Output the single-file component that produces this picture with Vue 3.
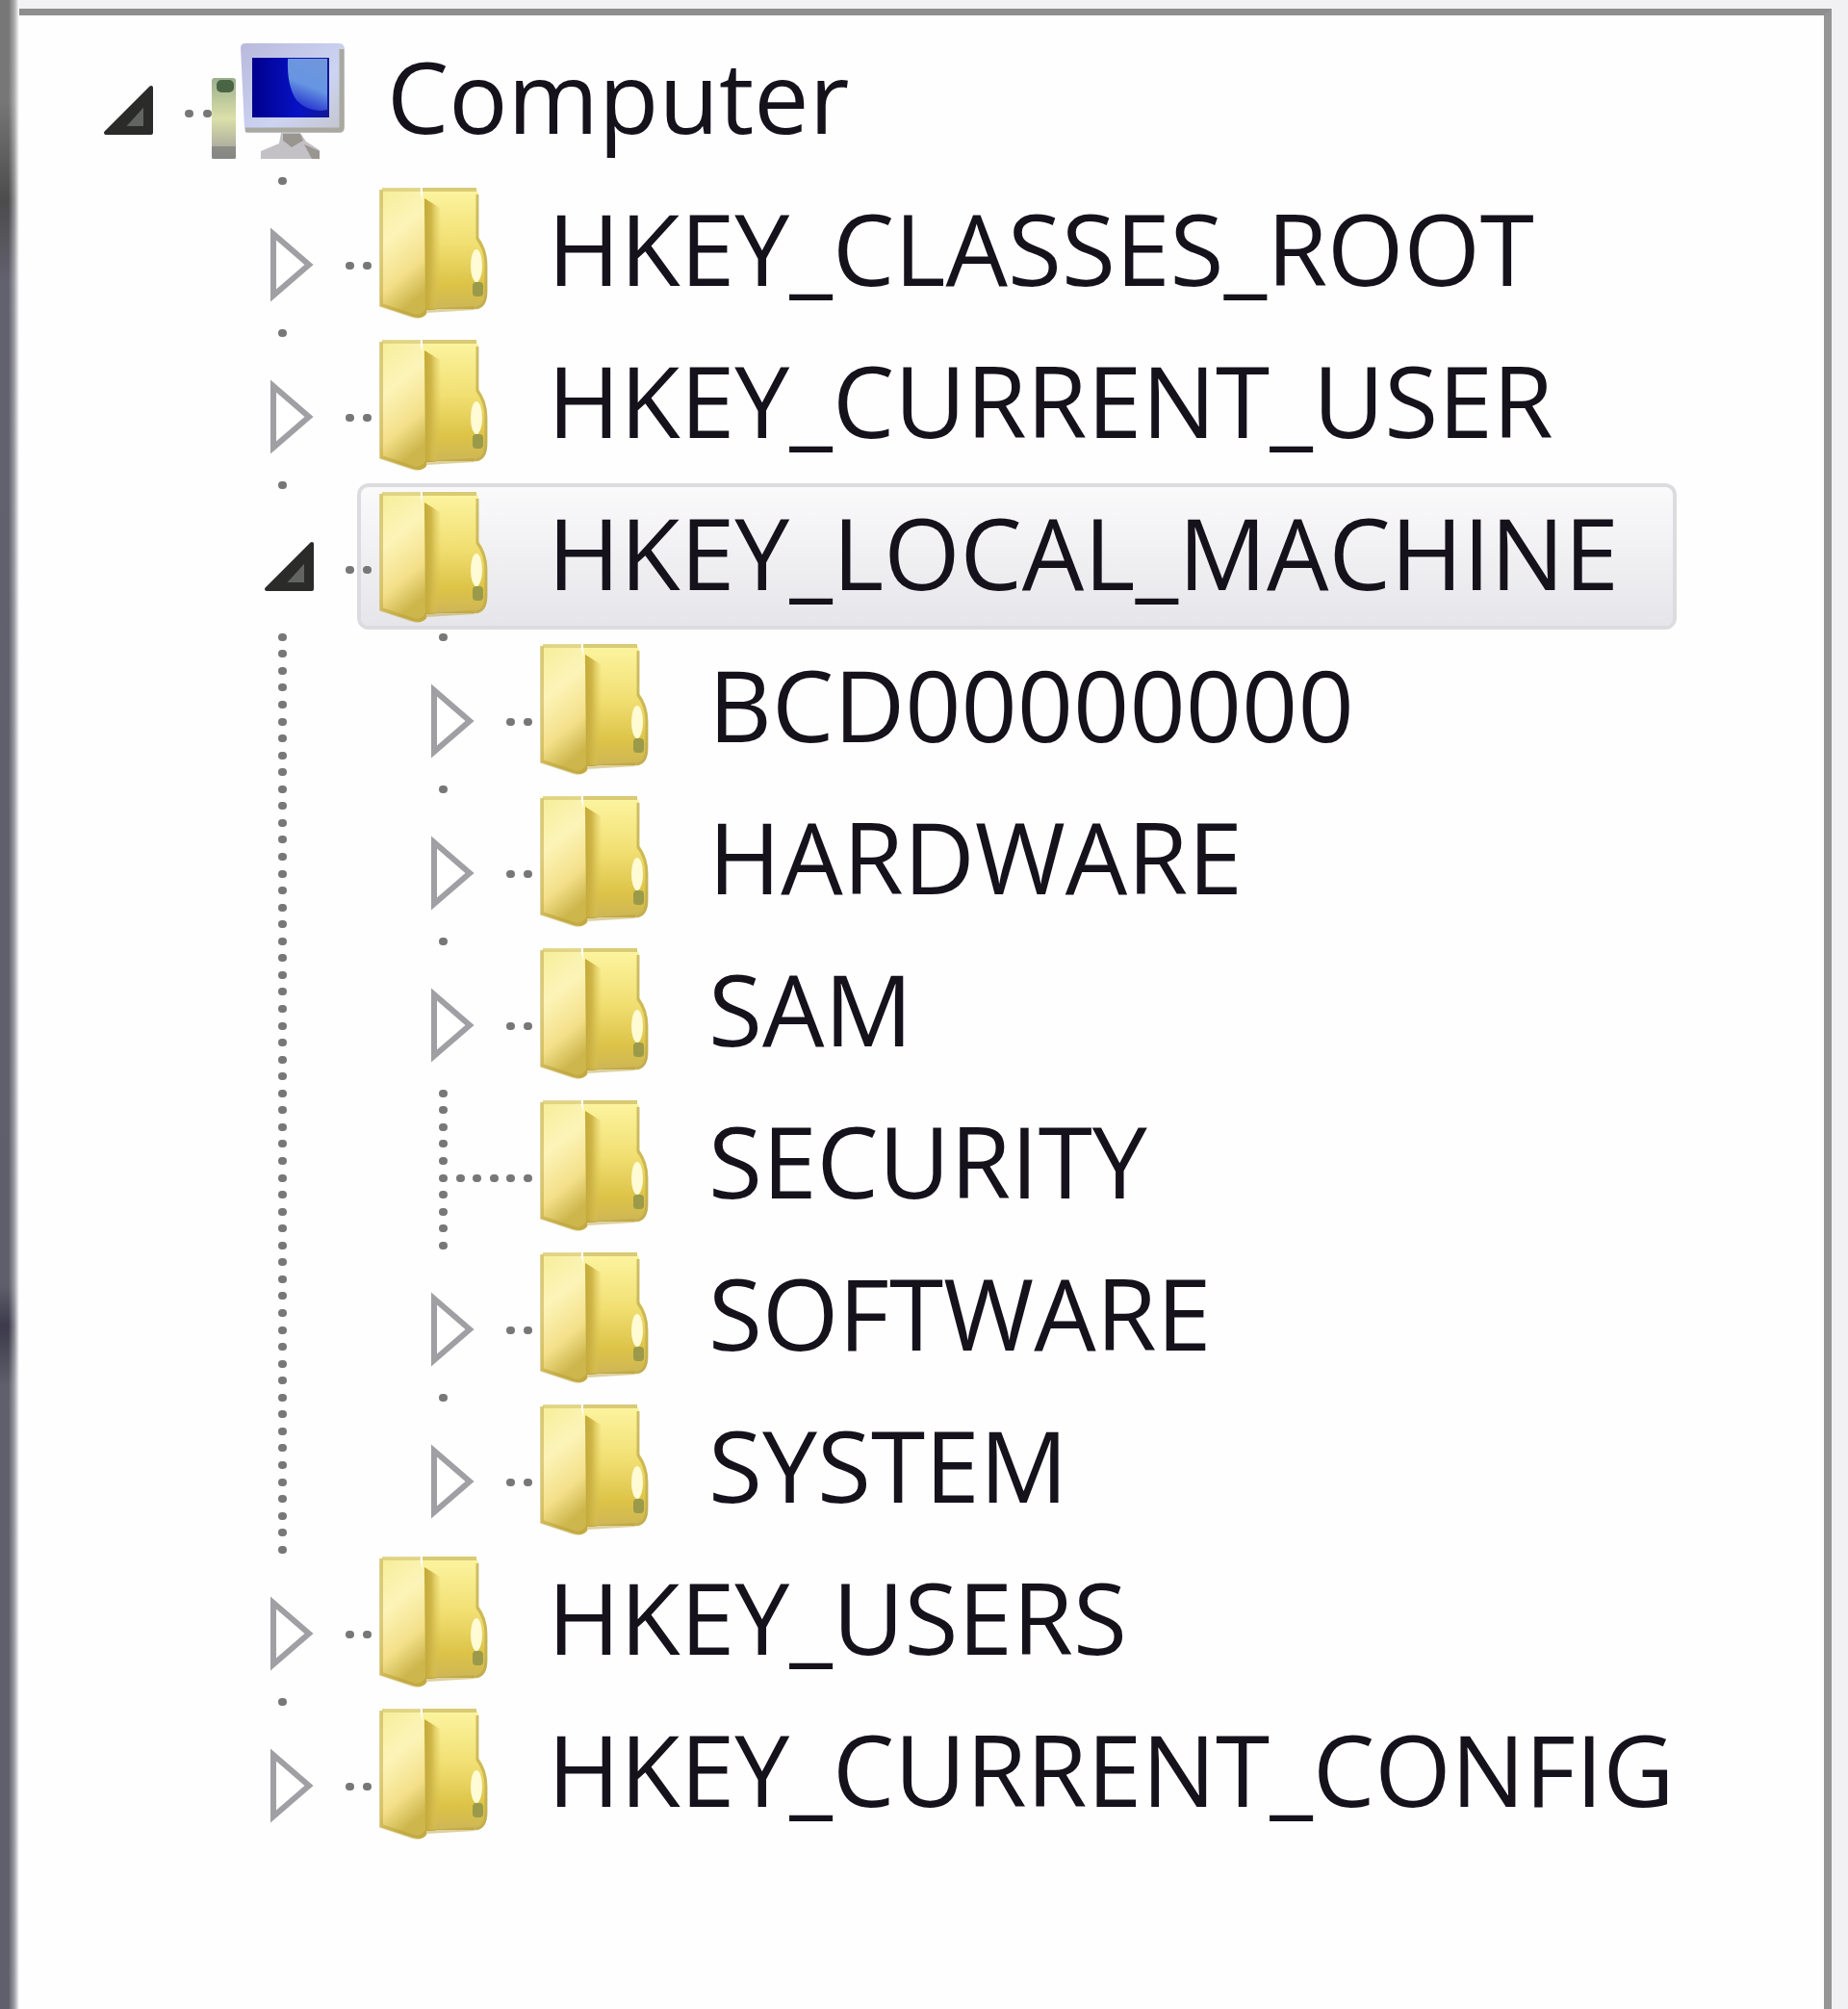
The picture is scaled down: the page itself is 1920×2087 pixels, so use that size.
<template>
    <div class="window">
        <div class="edge"></div>
        <nav class="panel" aria-label="Registry keys">
            <ul class="tree">
                <li v-for="row in rows" :key="row.name" class="row">
                    <svg v-for="n in row.level" :key="n" class="cell" viewBox="0 0 167 158">
                        <!-- the first column belongs to the root and stays empty -->
                        <path v-if="n > 1" class="dots" :d="fullLine" />
                    </svg>

                    <button
                        v-if="row.children"
                        class="cell toggle"
                        :aria-label="'Toggle ' + row.name"
                        :aria-expanded="!!row.open"
                        @click="row.open = !row.open"
                    >
                        <svg viewBox="0 0 167 158">
                            <path class="dots" :d="row.level ? 'M67 5h1M137 93h1M155 93h1' : 'M137 93h1M156 93h1'" />
                            <template v-if="row.open">
                                <path class="open" d="M51 113L98 66V113Z" />
                                <path class="open-shine" d="M77 104L88 92V104Z" />
                            </template>
                            <path v-else class="closed" d="M58 60V124L95 92Z" />
                        </svg>
                    </button>
                    <svg v-else class="cell" viewBox="0 0 167 158">
                        <path class="dots" :d="fullLine + 'M85 93h1M102 93h1M120 93h1M137 93h1M155 93h1'" />
                    </svg>

                    <button class="node" :class="{ selected: selected === row.name }" @click="selected = row.name">
                        <svg v-if="row.level === 0" class="icon" viewBox="0 0 118 140">
                            <rect x="-6" y="47" width="25" height="84" rx="3" fill="url(#tower)" />
                            <rect x="-1" y="49" width="18" height="13" rx="5" fill="#496544" />
                            <path d="M-6 118H19V131H-6Z" fill="#777" opacity=".6" />
                            <path d="M24 16Q24 11 29 11H126Q132 11 132 17V98Q132 104 126 104H33Q28 104 28 99Z" fill="url(#bezel)" />
                            <path d="M29 101H127Q129 101 129 98V17" fill="none" stroke="#aaa99f" stroke-width="5" />
                            <rect x="36" y="26" width="80" height="62" fill="url(#screen)" />
                            <path d="M73 27H114V80Q95 84 82 70Q72 56 73 27Z" fill="url(#glow)" />
                            <path d="M66 104H86L92 113L106 122V131H45V123L64 115Z" fill="#c3c1c5" />
                            <path d="M68 105H86L89 112L77 119L68 112ZM90 116L106 123V131H98Z" fill="#99958f" />
                        </svg>
                        <svg v-else class="icon" viewBox="0 0 118 140">
                            <path d="M46 5H100Q104 5 104 10V54Q113 66 113 82V112Q113 128 101 129H50Z" fill="url(#back)" />
                            <path d="M103 10V56Q112 68 112 84V110Q112 127 101 128" fill="none" stroke="#bca94d" stroke-width="3" opacity=".7" />
                            <ellipse cx="102" cy="84" rx="6" ry="17" fill="#fffbd5" />
                            <rect x="98" y="101" width="11" height="15" rx="4" fill="#9a9a4a" />
                            <path d="M46 5H102" stroke="#d9ca74" stroke-width="4" />
                            <path d="M2 8Q2 4 6 4H42Q50 20 50 60V134Q46 140 36 137L2 126Z" fill="url(#leaf)" />
                            <path d="M48 14L64 24Q68 76 60 130H49Z" fill="url(#fold)" />
                            <path d="M3 5V125L36 136Q44 139 50 131L100 128" fill="none" stroke="#b69b32" stroke-width="4" opacity=".45" />
                            <path d="M4 5H44" stroke="#d9ca74" stroke-width="4" opacity=".7" />
                        </svg>
                        <span class="label">{{ row.name }}</span>
                    </button>
                </li>
            </ul>
        </nav>

        <svg class="defs" aria-hidden="true">
            <defs>
                <linearGradient id="tower" x1="0" x2="0" y1="0" y2="1">
                    <stop offset="0" stop-color="#9aaf8d" />
                    <stop offset=".5" stop-color="#dce0a9" />
                    <stop offset="1" stop-color="#9b9b9b" />
                </linearGradient>
                <linearGradient id="bezel" x1="0" x2="1" y1="0" y2="1">
                    <stop offset="0" stop-color="#b9b9dc" />
                    <stop offset=".6" stop-color="#ccd4f2" />
                    <stop offset="1" stop-color="#c4c4cc" />
                </linearGradient>
                <linearGradient id="screen" x1="0" x2="1" y1="0" y2="0">
                    <stop offset="0" stop-color="#00008c" />
                    <stop offset=".6" stop-color="#0712c4" />
                    <stop offset="1" stop-color="#121994" />
                </linearGradient>
                <linearGradient id="glow" x1=".6" x2=".3" y1="0" y2="1">
                    <stop offset="0" stop-color="#6f96dd" />
                    <stop offset=".5" stop-color="#6695e2" />
                    <stop offset="1" stop-color="#1c24cc" />
                </linearGradient>
                <linearGradient id="leaf" x1="0" x2=".3" y1="0" y2="1">
                    <stop offset="0" stop-color="#f5ee98" />
                    <stop offset=".4" stop-color="#fcf4b8" />
                    <stop offset=".75" stop-color="#f3e08a" />
                    <stop offset="1" stop-color="#cdb64c" />
                </linearGradient>
                <linearGradient id="back" x1="0" x2="0" y1="0" y2="1">
                    <stop offset="0" stop-color="#fcf4a0" />
                    <stop offset=".45" stop-color="#f1df72" />
                    <stop offset=".8" stop-color="#dcc347" />
                    <stop offset="1" stop-color="#cdb657" />
                </linearGradient>
                <linearGradient id="fold" x1="0" x2="1" y1="0" y2="0">
                    <stop offset="0" stop-color="#c2a838" />
                    <stop offset=".4" stop-color="#cfb648" />
                    <stop offset="1" stop-color="#dcc75a" stop-opacity="0" />
                </linearGradient>
            </defs>
        </svg>
    </div>
</template>

<script setup>
import { ref, reactive, computed } from 'vue';

const key = (name) => ({ name, open: false, children: [] });

const root = reactive({
    name: 'Computer',
    open: true,
    children: [
        key('HKEY_CLASSES_ROOT'),
        key('HKEY_CURRENT_USER'),
        {
            name: 'HKEY_LOCAL_MACHINE',
            open: true,
            children: [
                key('BCD00000000'),
                key('HARDWARE'),
                key('SAM'),
                { name: 'SECURITY' },
                key('SOFTWARE'),
                key('SYSTEM'),
            ],
        },
        key('HKEY_USERS'),
        key('HKEY_CURRENT_CONFIG'),
    ],
});

const selected = ref('HKEY_LOCAL_MACHINE');

// nine dots down the full height of a row
const fullLine = [5, 22, 40, 57, 75, 93, 110, 128, 145].map((y) => `M67 ${y}h1`).join('');

const flatten = (node, level = 0) => {
    node.level = level;
    const below = node.open ? node.children.flatMap((child) => flatten(child, level + 1)) : [];
    return [node, ...below];
};

const rows = computed(() => flatten(root));
</script>

<style>
body {
    margin: 0;
    background: #f1f1f3;
}
</style>

<style scoped>
.window {
    display: flex;
    box-sizing: border-box;
    min-height: 100vh;
    padding: 9px 17px 0 0;
    background: #f1f1f3;
}

.edge {
    flex: none;
    width: 20px;
    margin-top: -9px;
    background:
        linear-gradient(90deg, transparent 45%, rgba(255, 255, 255, 0.4) 75%, #fff),
        linear-gradient(#777 0, #777 5%, #4c4c4c 10%, #62616e 14%, #5f5f6b 64%, #3c3a4b 66%, #5f606b 69%);
}

.panel {
    flex: 1;
    min-width: 0;
    padding: 9px 0 0 39px;
    border-top: 7px solid #8e8e8e;
    border-right: 8px solid #959595;
    background: #fefefe;
}

.tree {
    margin: 0;
    padding: 0;
    list-style: none;
}

.row {
    display: flex;
    align-items: center;
    height: 158px;
}

.cell {
    flex: none;
    width: 167px;
    height: 158px;
}

.toggle {
    position: relative;
    z-index: 1;
    padding: 0;
    border: 0;
    background: none;
}

.toggle svg {
    display: block;
    width: 100%;
    height: 100%;
}

.dots {
    fill: none;
    stroke: #777;
    stroke-width: 8px;
    stroke-linecap: round;
}

.open {
    fill: #2b2c29;
    stroke: #2b2c29;
    stroke-width: 4px;
    stroke-linejoin: round;
}

.open-shine {
    fill: #62645f;
    stroke: #62645f;
    stroke-width: 4px;
}

.closed {
    fill: #fff;
    stroke: #a0a0a4;
    stroke-width: 6px;
}

.node {
    display: flex;
    align-items: center;
    box-sizing: border-box;
    height: 152px;
    margin-left: -22px;
    padding: 0 56px 0 18px;
    border: 4px solid transparent;
    border-radius: 12px;
    background: none;
    color: #15121c;
    font-family: "Open Sans", "Noto Sans", sans-serif;
    font-size: 102px;
    line-height: 136px;
    white-space: nowrap;
}

.node.selected {
    border-color: #dcdce0;
    background: linear-gradient(#fafafb, #e6e6ea) padding-box;
}

.label {
    padding-bottom: 8px;
}

.icon {
    flex: none;
    width: 118px;
    height: 140px;
    margin-right: 58px;
    overflow: visible;
}

.defs {
    position: absolute;
    width: 0;
    height: 0;
}
</style>
